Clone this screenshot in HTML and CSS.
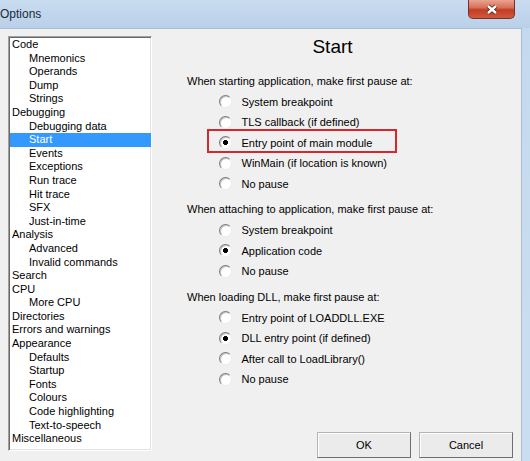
FILE: index.html
```html
<!DOCTYPE html>
<html lang="en">
<head>
  <meta charset="UTF-8">
  <title>Options</title>
  <link rel="stylesheet" href="styles.css">
</head>
<body>

  <div class="window">
    <div class="titlebar">
      <span class="title">Options</span>
      <button class="close-btn" title="Close">
        <svg width="14" height="11" viewBox="0 0 14 11">
          <path d="M3 2 L11 9 M11 2 L3 9" stroke="#5a1f15" stroke-width="4.2" fill="none"/>
          <path d="M3 2 L11 9 M11 2 L3 9" stroke="#fff" stroke-width="2.4" fill="none"/>
        </svg>
      </button>
    </div>

    <div class="frame">
      <div class="client">
        <ul class="tree" id="tree">
          <!-- Populated by JS -->
        </ul>

        <div class="panel">
          <h1 class="page-title">Start</h1>

          <div class="group">
            <div class="group-label">When starting application, make first pause at:</div>
            <label class="option"><input type="radio" name="start">System breakpoint</label>
            <label class="option"><input type="radio" name="start">TLS callback (if defined)</label>
            <label class="option marked"><input type="radio" name="start" checked>Entry point of main module</label>
            <label class="option"><input type="radio" name="start">WinMain (if location is known)</label>
            <label class="option"><input type="radio" name="start">No pause</label>
          </div>

          <div class="group">
            <div class="group-label">When attaching to application, make first pause at:</div>
            <label class="option"><input type="radio" name="attach">System breakpoint</label>
            <label class="option"><input type="radio" name="attach" checked>Application code</label>
            <label class="option"><input type="radio" name="attach">No pause</label>
          </div>

          <div class="group">
            <div class="group-label">When loading DLL, make first pause at:</div>
            <label class="option"><input type="radio" name="dll">Entry point of LOADDLL.EXE</label>
            <label class="option"><input type="radio" name="dll" checked>DLL entry point (if defined)</label>
            <label class="option"><input type="radio" name="dll">After call to LoadLibrary()</label>
            <label class="option"><input type="radio" name="dll">No pause</label>
          </div>

          <div class="buttons">
            <button class="btn">OK</button>
            <button class="btn">Cancel</button>
          </div>
        </div>
      </div>
      <div class="edge"></div>
    </div>
  </div>

  <script>
    // Option pages; a leading "-" marks a sub-page
    const pages = [
      "Code", "-Mnemonics", "-Operands", "-Dump", "-Strings",
      "Debugging", "-Debugging data", "-Start", "-Events", "-Exceptions",
      "-Run trace", "-Hit trace", "-SFX", "-Just-in-time",
      "Analysis", "-Advanced", "-Invalid commands",
      "Search", "CPU", "-More CPU", "Directories", "Errors and warnings",
      "Appearance", "-Defaults", "-Startup", "-Fonts", "-Colours",
      "-Code highlighting", "-Text-to-speech", "Miscellaneous"
    ];

    const tree = document.getElementById('tree');
    const current = "Start";

    pages.forEach(page => {
      const li = document.createElement('li');
      const sub = page.startsWith('-');
      const name = sub ? page.slice(1) : page;
      li.textContent = name;
      if (sub) li.className = 'sub';
      if (name === current) li.classList.add('selected');
      tree.appendChild(li);
    });
  </script>

</body>
</html>
```

FILE: styles.css
```css
body {
  margin: 0;
  font-family: "Liberation Sans", Arial, sans-serif;
  font-size: 11px;
  color: #000;
  background-color: #c3d8ee;
}

.window {
  width: 530px;
  height: 461px;
  overflow: hidden;
  display: flex;
  flex-direction: column;
}

/* Title bar */
.titlebar {
  height: 28px;
  flex: none;
  display: flex;
  align-items: flex-start;
  background: linear-gradient(to bottom, #c9dcf0, #b9d0e9);
}

.title {
  font-size: 12px;
  line-height: 28px;
  color: #1c2b3b;
}

.close-btn {
  margin-left: auto;
  margin-right: 15px;
  width: 47px;
  height: 19px;
  padding: 0;
  border: 1px solid #7a3024;
  border-top: none;
  border-radius: 0 0 5px 5px;
  background: linear-gradient(to bottom, #e8a491 0%, #d77058 42%, #c33c24 55%, #d05a3e 100%);
  display: flex;
  align-items: center;
  justify-content: center;
}

/* Dialog body */
.frame {
  flex: 1;
  display: flex;
}

.client {
  width: 522px;
  box-sizing: border-box;
  display: flex;
  padding: 7px 8px 0 8px;
  background-color: #f0f0f0;
  border-top: 1px solid #aabdd1;
  border-right: 1px solid #aabdd1;
}

.edge {
  flex: 1;
  background: linear-gradient(to bottom, #c5d9ee, #cbdef1);
}

/* Page list */
.tree {
  list-style: none;
  margin: 0;
  padding: 1px 0 0 0;
  width: 144px;
  height: 415px;
  box-sizing: border-box;
  flex: none;
  background-color: #fff;
  border: 1px solid;
  border-color: #a0a0a0 #fff #fff #a0a0a0;
  box-shadow: inset 1px 1px 0 #696969, inset -1px -1px 0 #e3e3e3;
}

.tree li {
  line-height: 13.6px;
  height: 13.6px;
  padding-left: 2px;
  margin-left: 1px;
  white-space: nowrap;
}

.tree li.sub {
  padding-left: 19px;
}

.tree li.selected {
  background-color: #3399ff;
  color: #fff;
}

/* Settings page */
.panel {
  flex: 1;
  display: flex;
  flex-direction: column;
}

.page-title {
  margin: 0 0 12.75px 0;
  font-size: 19px;
  font-weight: normal;
  line-height: 22px;
  text-align: center;
}

.group + .group {
  margin-top: 5.5px;
}

.group-label {
  height: 20.5px;
  line-height: 20.5px;
  padding-left: 35px;
}

.option {
  display: flex;
  align-items: center;
  height: 20.5px;
  padding-left: 67px;
  position: relative;
}

.option input {
  appearance: none;
  -webkit-appearance: none;
  margin: 0 9.5px 0 0;
  width: 13px;
  height: 13px;
  border-radius: 50%;
  border: 1px solid;
  border-color: #7c7c7c #ececec #ececec #7c7c7c;
  box-shadow: inset 1px 1px 0 #c4c4c4;
  background-color: #fff;
}

.option input:checked {
  background: radial-gradient(circle, #000 2.2px, #fff 2.8px);
}

/* highlight frame around one choice */
.option.marked::after {
  content: "";
  position: absolute;
  left: 55px;
  top: -3.25px;
  width: 190px;
  height: 24px;
  box-sizing: border-box;
  border: 2px solid #d7262e;
}

.buttons {
  display: flex;
  justify-content: flex-end;
  gap: 8px;
  margin-top: 42.5px;
}

.btn {
  width: 94px;
  height: 26px;
  padding: 0;
  font-family: inherit;
  font-size: 11px;
  color: #000;
  background-color: #ebebeb;
  border: 1px solid;
  border-color: #b4b4b4 #6f6f6f #6f6f6f #b4b4b4;
  box-shadow: inset 1px 1px 0 #fff;
}
```
